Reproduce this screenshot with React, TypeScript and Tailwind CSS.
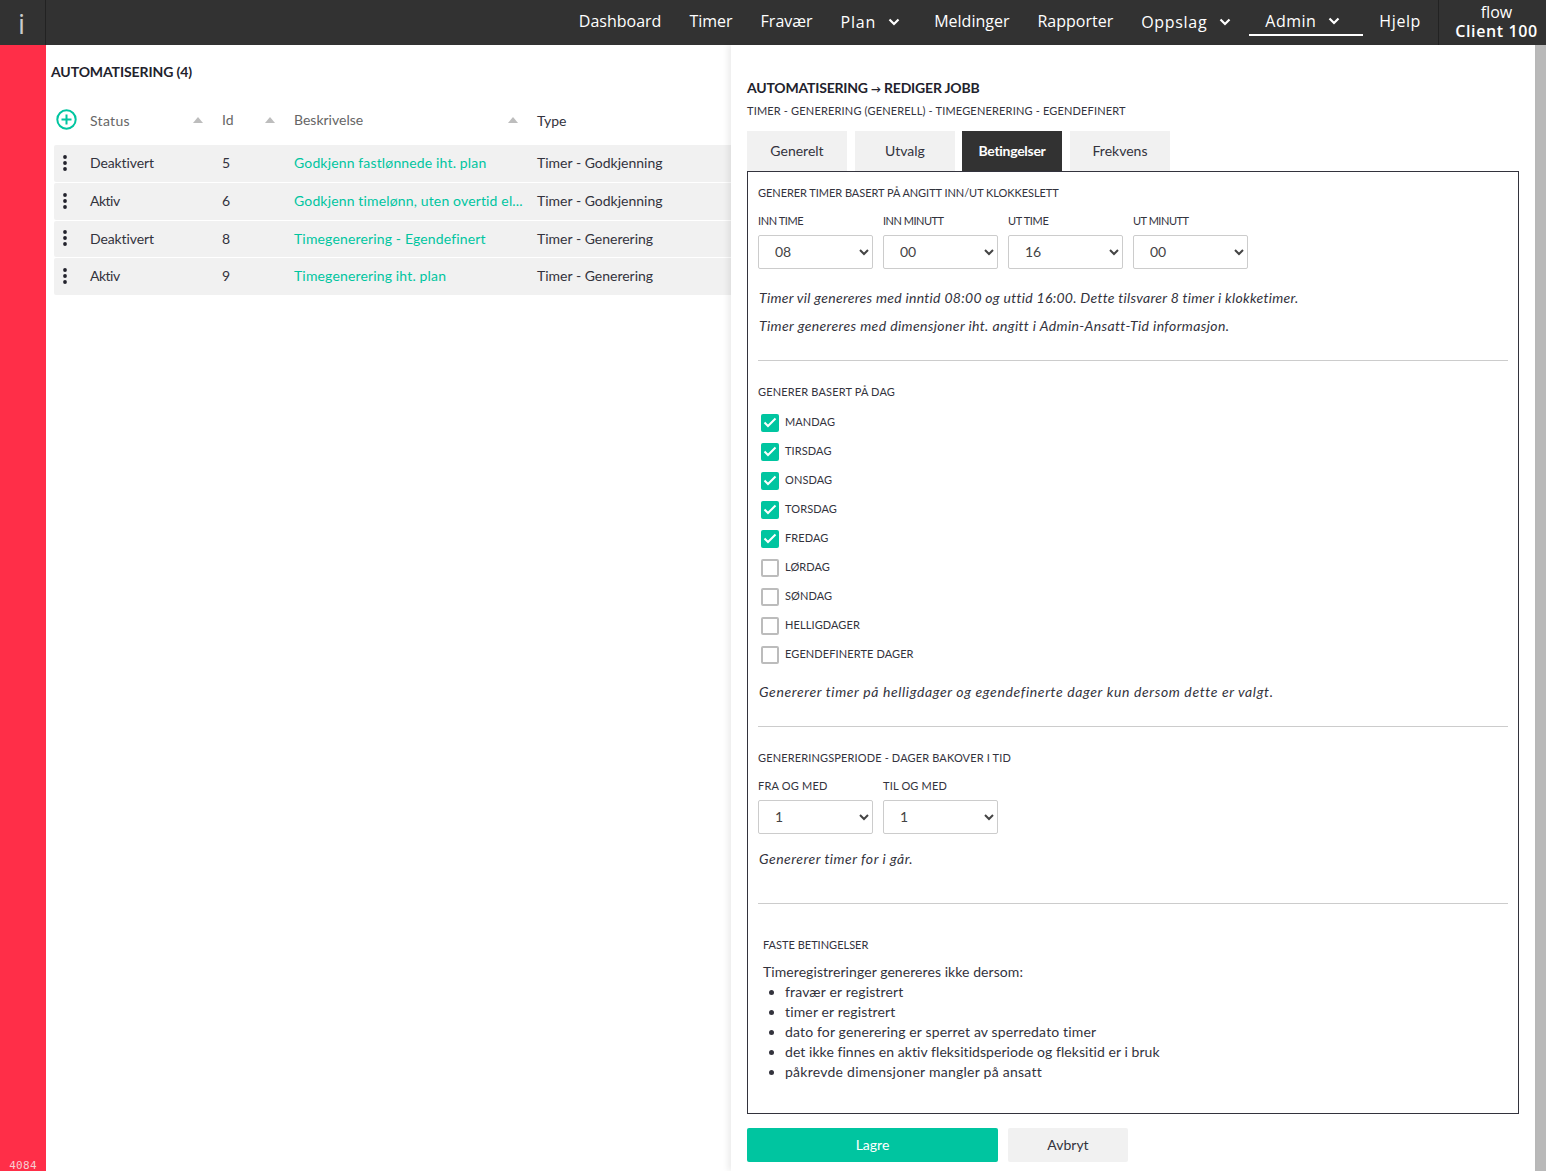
import React from 'react'

const font = "font-['Lato','Liberation_Sans',sans-serif]"

const rows = [
  { status: 'Deaktivert', id: '5', text: 'Godkjenn fastlønnede iht. plan', type: 'Timer - Godkjenning', h: 'h-[37px]' },
  { status: 'Aktiv', id: '6', text: 'Godkjenn timelønn, uten overtid el...', type: 'Timer - Godkjenning', h: 'h-[37px]' },
  { status: 'Deaktivert', id: '8', text: 'Timegenerering - Egendefinert', type: 'Timer - Generering', h: 'h-[36px]' },
  { status: 'Aktiv', id: '9', text: 'Timegenerering iht. plan', type: 'Timer - Generering', h: 'h-[37px]' },
]

const days = [
  { label: 'MANDAG', on: true },
  { label: 'TIRSDAG', on: true },
  { label: 'ONSDAG', on: true },
  { label: 'TORSDAG', on: true },
  { label: 'FREDAG', on: true },
  { label: 'LØRDAG', on: false },
  { label: 'SØNDAG', on: false },
  { label: 'HELLIGDAGER', on: false },
  { label: 'EGENDEFINERTE DAGER', on: false },
]

function Chevron() {
  return (
    <svg width="12" height="8" viewBox="0 0 12 8" className="ml-[12px]" fill="none">
      <path d="M1.5 1.5 L6 6 L10.5 1.5" stroke="white" strokeWidth="2.2" />
    </svg>
  )
}

function SortArrow() {
  return <span className="w-0 h-0 border-x-[5px] border-x-transparent border-b-[6px] border-b-[#bdbdbd]" />
}

function Field({ label, value, labelClass }: { label: string; value: string; labelClass: string }) {
  return (
    <div className="w-[115px]">
      <div className={`text-[11px] leading-[14px] text-[#33333d] mb-[7px] ${labelClass}`}>{label}</div>
      <select
        defaultValue={value}
        className={`${font} w-[115px] h-[34px] pl-[12px] pr-[4px] pb-[2px] text-[14px] text-[#444] bg-white border border-[#ccc] rounded-[2px]`}
      >
        <option value={value}>{value}</option>
      </select>
    </div>
  )
}

function Day({ label, on }: { label: string; on: boolean }) {
  return (
    <div className="h-[29px] flex items-center pl-[3px]">
      {on ? (
        <span className="w-[18px] h-[18px] rounded-[2px] bg-[#00c5a0] flex items-center justify-center mt-[2px]">
          <svg width="14" height="11" viewBox="0 0 14 11" fill="none">
            <path d="M1.5 5.5 L5 9 L12.5 1.5" stroke="white" strokeWidth="2" />
          </svg>
        </span>
      ) : (
        <span className="w-[18px] h-[18px] rounded-[2px] bg-white border-2 border-[#bcbcbc] mt-[2px]" />
      )}
      <span className="ml-[6px] mt-[2px] text-[11px] tracking-[0.1px] text-[#33333d]">{label}</span>
    </div>
  )
}

export default function App() {
  return (
    <div className={`${font} w-[1546px] h-[1171px] overflow-hidden flex flex-col bg-white text-[#33333d]`}>
      {/* top bar */}
      <header className="h-[45px] shrink-0 bg-[#323232] text-white flex items-center font-['Open_Sans',sans-serif]">
        <div className="w-[46px] h-full border-r border-[#222] flex items-center justify-center pr-[2px] text-[28px] text-[#ccc]">i</div>
        <nav className="flex-1 flex items-center justify-end h-full text-[16px]">
          <span className="mr-[28px] mb-[4px]">Dashboard</span>
          <span className="mr-[28px] mb-[4px]">Timer</span>
          <span className="mr-[28px] mb-[4px]">Fravær</span>
          <span className="flex items-center mr-[34px] mb-[2px] tracking-[0.8px]">Plan<Chevron /></span>
          <span className="mr-[28px] mb-[4px]">Meldinger</span>
          <span className="mr-[28px] mb-[4px]">Rapporter</span>
          <span className="flex items-center mr-[18px] mb-[2px] tracking-[0.7px]">Oppslag<Chevron /></span>
          <span className="flex items-center self-start h-[36px] pt-[8px] w-[114px] pl-[16px] border-b-2 border-white mr-[16px] tracking-[0.5px]">Admin<Chevron /></span>
          <span className="mr-[17px] mb-[4px] tracking-[0.6px]">Hjelp</span>
        </nav>
        <div className="w-[108px] h-full border-l border-[#222] flex flex-col items-center leading-[19px] pl-[8px]">
          <span className="text-[16px] font-normal mt-[3px]">flow</span>
          <span className="text-[16px] font-semibold whitespace-nowrap tracking-[0.6px]">Client 100</span>
        </div>
      </header>

      <div className="flex-1 flex min-h-0">
        {/* red side strip */}
        <aside className="w-[46px] bg-[#ff2e48] flex flex-col justify-end items-center">
          <span className="text-[11px] leading-[11px] tracking-[0.3px] text-[#f7cdd2] font-['DejaVu_Sans_Mono',monospace]">4084</span>
        </aside>

        {/* job list */}
        <section className="w-[685px] pl-[5px] pt-[19px] overflow-hidden">
          <h1 className="text-[14px] leading-[15px] font-bold text-[#22222c] tracking-[-0.1px]">AUTOMATISERING (4)</h1>
          <div className="ml-[3px] mt-[23px] h-[35px] flex items-center text-[14px] text-[#666]">
            <div className="w-[36px] pl-[2px] flex items-center">
              <svg width="21" height="21" viewBox="0 0 21 21" fill="none">
                <circle cx="10.5" cy="10.5" r="9.2" stroke="#00c5a0" strokeWidth="2" />
                <path d="M10.5 5.5 V15.5 M5.5 10.5 H15.5" stroke="#00c5a0" strokeWidth="2" />
              </svg>
            </div>
            <div className="w-[132px] flex items-center justify-between pr-[19px]"><span className="tracking-[0.3px] mt-[2px]">Status</span><SortArrow /></div>
            <div className="w-[72px] flex items-center justify-between pr-[19px]"><span>Id</span><SortArrow /></div>
            <div className="w-[243px] flex items-center justify-between pr-[19px]"><span>Beskrivelse</span><SortArrow /></div>
            <div className="text-[#33333d] mt-[2px]">Type</div>
          </div>
          <div className="ml-[3px] mt-[8px] flex flex-col gap-[1px]">
            {rows.map(r => (
              <div key={r.id} className={`${r.h} bg-[#f1f1f1] rounded-l-[2px] flex items-center pb-[2px] text-[14px] text-[#33333d]`}>
                <div className="w-[36px] flex justify-center">
                  <svg width="4" height="16" viewBox="0 0 4 16" className="ml-[-15px]" fill="#22222c">
                    <circle cx="2" cy="2" r="1.9" />
                    <circle cx="2" cy="8" r="1.9" />
                    <circle cx="2" cy="14" r="1.9" />
                  </svg>
                </div>
                <div className={r.status === 'Aktiv' ? 'w-[132px] tracking-[-0.5px]' : 'w-[132px] tracking-[-0.1px]'}>{r.status}</div>
                <div className="w-[72px]">{r.id}</div>
                <div className="w-[243px] whitespace-nowrap tracking-[0.15px] text-[#00c5a0]">{r.text}</div>
                <div>{r.type}</div>
              </div>
            ))}
          </div>
        </section>

        {/* edit panel */}
        <main className="w-[804px] pl-[16px] pr-[16px] shadow-[-3px_0_6px_rgba(0,0,0,0.08)] relative">
          <h2 className="mt-[35px] h-[16px] text-[14px] leading-[16px] font-bold text-[#22222c] tracking-[-0.2px]">
            AUTOMATISERING <span className="text-[10px]">→</span> REDIGER JOBB
          </h2>
          <p className="mt-[7px] text-[11px] leading-[16px] tracking-[0.17px]">TIMER - GENERERING (GENERELL) - TIMEGENERERING - EGENDEFINERT</p>

          <div className="mt-[12px] flex text-[14px]">
            <div className="w-[100px] h-[40px] mr-[8px] pb-[2px] flex items-center justify-center bg-[#f1f1f1]">Generelt</div>
            <div className="w-[100px] h-[40px] mr-[7px] pb-[2px] flex items-center justify-center bg-[#f1f1f1]">Utvalg</div>
            <div className="w-[100px] h-[40px] mr-[8px] pb-[2px] flex items-center justify-center bg-[#323232] text-white font-bold tracking-[-0.3px]">Betingelser</div>
            <div className="w-[100px] h-[40px] pb-[2px] flex items-center justify-center bg-[#f1f1f1]">Frekvens</div>
          </div>

          <div className="w-[772px] h-[943px] border border-[#33333d] px-[10px] pt-[14px]">
            <div className="text-[11px] leading-[14px] tracking-[-0.05px]">GENERER TIMER BASERT PÅ ANGITT INN/UT KLOKKESLETT</div>
            <div className="mt-[14px] flex gap-[10px]">
              <Field label="INN TIME" value="08" labelClass="tracking-[-0.4px]" />
              <Field label="INN MINUTT" value="00" labelClass="tracking-[-0.5px]" />
              <Field label="UT TIME" value="16" labelClass="tracking-[-0.35px]" />
              <Field label="UT MINUTT" value="00" labelClass="tracking-[-0.48px]" />
            </div>
            <p className="mt-[21px] text-[14px] leading-[16px] italic pl-[1px] tracking-[0.29px]">Timer vil genereres med inntid 08:00 og uttid 16:00. Dette tilsvarer 8 timer i klokketimer.</p>
            <p className="mt-[12px] text-[14px] leading-[16px] italic pl-[1px] tracking-[0.38px]">Timer genereres med dimensjoner iht. angitt i Admin-Ansatt-Tid informasjon.</p>
            <hr className="mt-[26px] border-[#ccc]" />

            <div className="mt-[24px] text-[11px] leading-[14px] tracking-[0.15px]">GENERER BASERT PÅ DAG</div>
            <div className="mt-[8px]">
              {days.map(d => <Day key={d.label} label={d.label} on={d.on} />)}
            </div>
            <p className="mt-[16px] text-[14px] leading-[16px] italic pl-[1px] tracking-[0.63px]">Genererer timer på helligdager og egendefinerte dager kun dersom dette er valgt.</p>
            <hr className="mt-[26px] border-[#ccc]" />

            <div className="mt-[24px] text-[11px] leading-[14px] tracking-[0.14px]">GENERERINGSPERIODE - DAGER BAKOVER I TID</div>
            <div className="mt-[14px] flex gap-[10px]">
              <Field label="FRA OG MED" value="1" labelClass="tracking-[0.2px]" />
              <Field label="TIL OG MED" value="1" labelClass="tracking-[0.17px]" />
            </div>
            <p className="mt-[17px] text-[14px] leading-[16px] italic pl-[1px] tracking-[0.5px]">Genererer timer for i går.</p>
            <hr className="mt-[36px] border-[#ccc]" />

            <div className="mt-[34px] pl-[5px]">
              <div className="text-[11px] leading-[14px]">FASTE BETINGELSER</div>
              <p className="mt-[10px] text-[14px] leading-[20px] tracking-[0.07px]">Timeregistreringer genereres ikke dersom:</p>
              <ul className="list-disc pl-[22px] text-[14px] leading-[20px] tracking-[0.15px]">
                <li>fravær er registrert</li>
                <li>timer er registrert</li>
                <li>dato for generering er sperret av sperredato timer</li>
                <li className="tracking-[0.06px]">det ikke finnes en aktiv fleksitidsperiode og fleksitid er i bruk</li>
                <li className="tracking-[0.25px]">påkrevde dimensjoner mangler på ansatt</li>
              </ul>
            </div>
          </div>

          <div className="mt-[14px] flex gap-[10px] text-[14px]">
            <div className="w-[251px] h-[34px] pb-[2px] rounded-[2px] bg-[#00c5a0] text-white flex items-center justify-center">Lagre</div>
            <div className="w-[120px] h-[34px] pb-[2px] rounded-[2px] bg-[#f1f1f1] flex items-center justify-center">Avbryt</div>
          </div>
        </main>

        <div className="w-[11px] bg-[#b9b9b9]" />
      </div>
    </div>
  )
}
